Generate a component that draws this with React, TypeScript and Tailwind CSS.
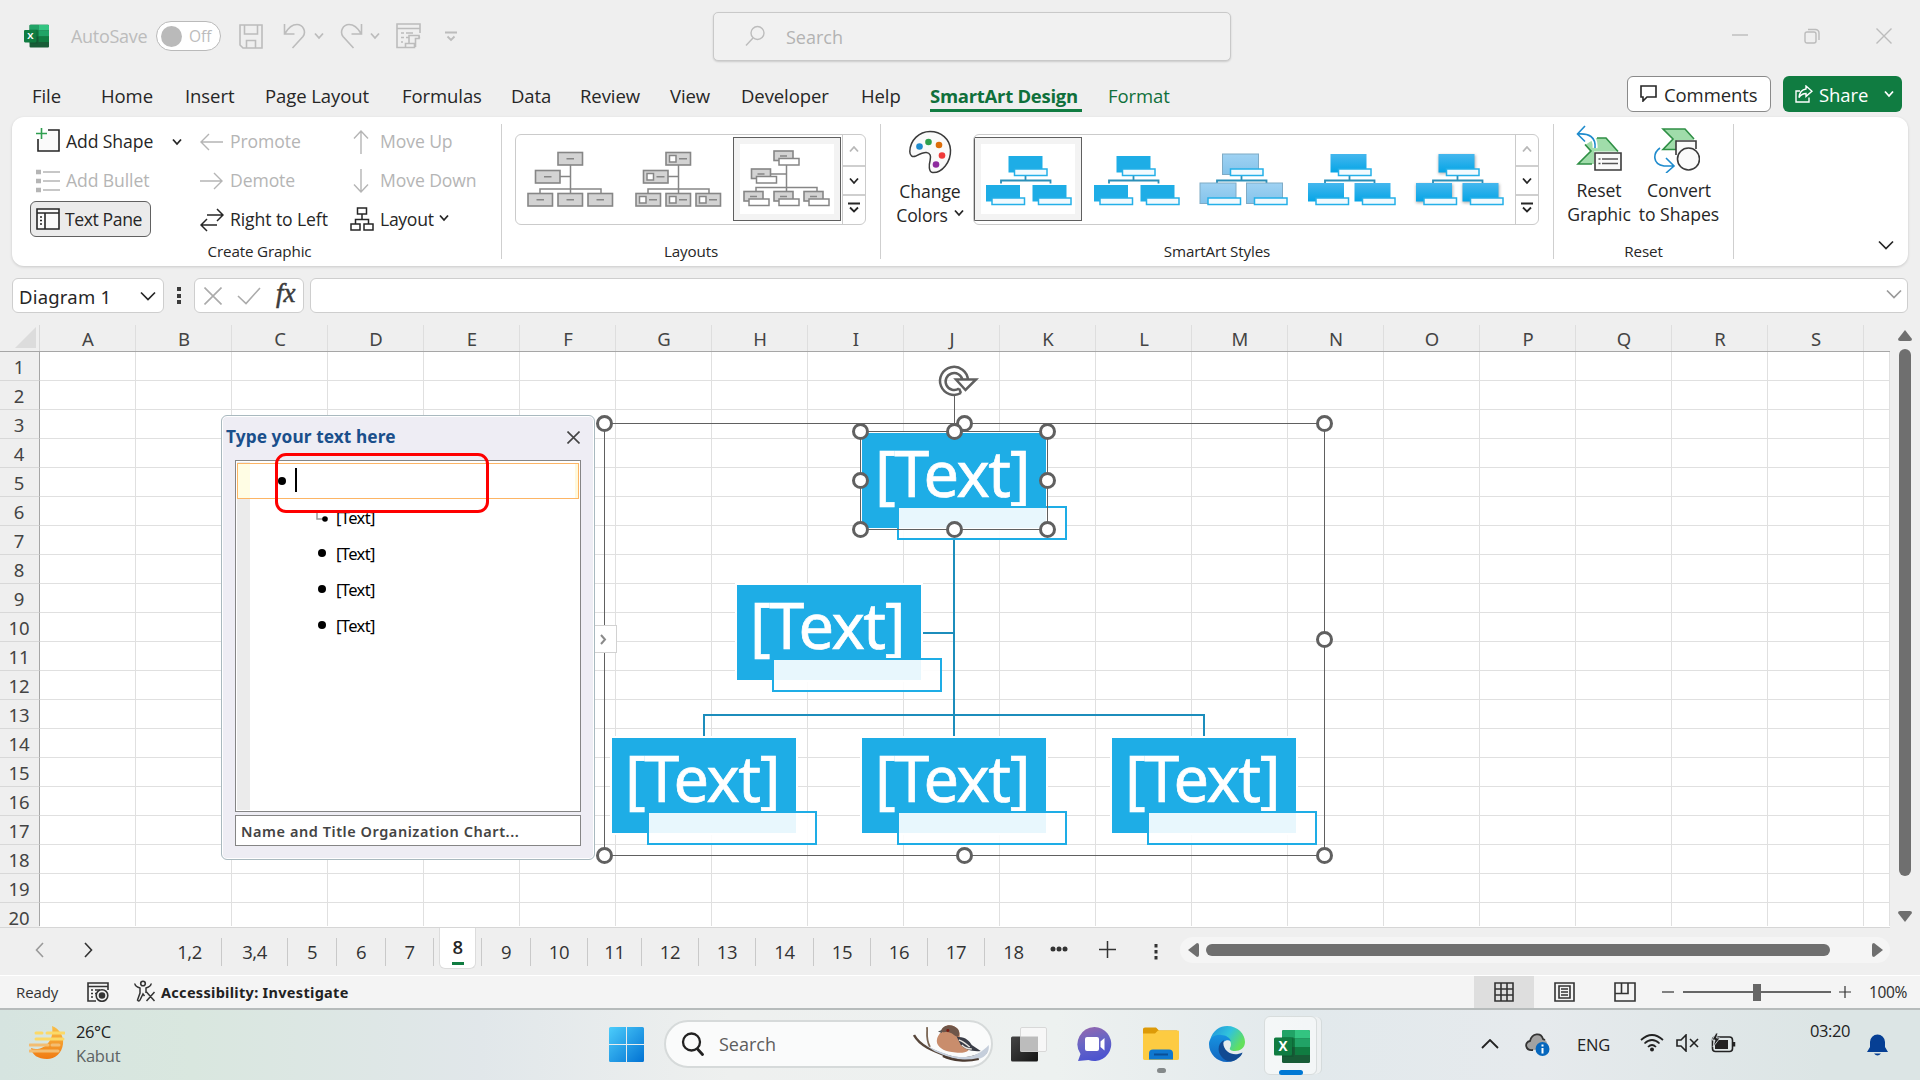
import React from "react";

type Kids = { children?: React.ReactNode };

const UI = "font-['Open_Sans','Noto_Sans',sans-serif]";

function Icon({ w, h, c = "", children }: Kids & { w: number; h: number; c?: string }) {
  return (
    <svg width={w} height={h} viewBox={`0 0 ${w} ${h}`} fill="none" stroke="currentColor" strokeWidth="1.6" className={`shrink-0 ${c}`}>
      {children}
    </svg>
  );
}

function Chevron({ c = "" }: { c?: string }) {
  return (
    <Icon w={10} h={8} c={c}>
      <path d="M1 1.5 5 6 9 1.5" strokeWidth="1.8" />
    </Icon>
  );
}

function WideChevron({ c = "" }: { c?: string }) {
  return (
    <Icon w={16} h={10} c={c}>
      <path d="M1 1.5 8 8.5 15 1.5" strokeWidth="1.7" />
    </Icon>
  );
}

function ExcelLogo({ size, c = "" }: { size: number; c?: string }) {
  return (
    <svg width={size} height={size} viewBox="0 0 36 36" className={`shrink-0 ${c}`}>
      <rect x="8" y="1" width="28" height="33" rx="1.500" fill="#185c37" />
      <path d="M8 2.500Q8 1 9.500 1H21v8.500H8z" fill="#21a366" />
      <path d="M21 1h13.500Q36 1 36 2.500v7H21z" fill="#33c481" />
      <path d="M8 9.500h13V18H8z" fill="#107c41" />
      <path d="M21 9.500h15V18H21z" fill="#21a366" />
      <path d="M21 18h15v8H21z" fill="#107c41" />
      <path d="M8 8h11.500v20H8z" fill="#0b4f2a" opacity=".4" />
      <rect x="0" y="8.500" width="18" height="18" rx="1.600" fill="#107c41" />
      <text x="9" y="22.300" textAnchor="middle" fontSize="13.500" fontWeight="700" fontFamily="Open Sans, sans-serif" fill="#fff">X</text>
    </svg>
  );
}

function TitleBar() {
  return (
    <header className="flex h-[74px] shrink-0 items-start text-[#bcbcbc]">
      <div className="flex h-[72px] w-[713px] items-center pl-6">
        <ExcelLogo size={25} />
        <span className="mt-px ml-[22px] w-[85px] text-[18px] tracking-[-0.300px]">AutoSave</span>
        <div className="flex h-[30px] w-[65px] items-center rounded-full border border-[#bababa] bg-white pl-1">
          <div className="h-[21px] w-[21px] rounded-full bg-[#bababa]" />
          <span className="mt-px ml-[7px] text-[15.500px]">Off</span>
        </div>
        <Icon w={24} h={25} c="ml-[18px]">
          <path d="M1 1h22v23H4l-3-3zM5.500 1v9h13V1M7.500 24v-7.500h9V24" />
        </Icon>
        <Icon w={23} h={26} c="ml-5">
          <path d="M1.500 1v10h10M2 10.500C6 3.500 10 1.500 14 1.500c6 0 9.500 7 6 12L9.500 25" />
        </Icon>
        <Chevron c="ml-2" />
        <Icon w={23} h={26} c="ml-4">
          <path d="M21.500 1v10h-10M21 10.500C17 3.500 13 1.500 9 1.500c-6 0-9.500 7-6 12L13.500 25" />
        </Icon>
        <Chevron c="ml-[7px]" />
        <Icon w={25} h={26} c="ml-4">
          <path d="M9 24.500H1V1h23v9M1 5.500h23M5 10h3M10 10h7M5 14.500h3M10 14.500h3M5 19h2M9.500 21.500v-1h9v4h-9zM13 20.500v-8h10v3h-3.500v8.500M23 12.500l.500 3" />
        </Icon>
        <Icon w={12} h={11} c="ml-6">
          <path d="M0 1.500h12M2.500 5.500 6 9l3.500-3.500" strokeWidth="1.800" />
        </Icon>
      </div>
      <div className="mt-3 flex h-[49px] w-[518px] items-center rounded-[5px] border border-[#c9c9c9] bg-[#f1f1f1] pl-[31px] shadow-[0_1px_2px_rgba(0,0,0,0.15)]">
        <Icon w={20} h={22} c="-mt-0.5">
          <circle cx="12.500" cy="8" r="6.500" strokeWidth="1.400" />
          <path d="M8 13 1 20.500" strokeWidth="1.400" />
        </Icon>
        <span className="mt-0.5 ml-[21px] text-[18px] text-[#b3b3b3]">Search</span>
      </div>
      <div className="flex h-[72px] flex-1 items-center pl-[501px]">
        <Icon w={16} h={16} c="-mt-0.5"><path d="M0 8h16" strokeWidth="1.400" /></Icon>
        <Icon w={16} h={16} c="ml-14">
          <rect x="1" y="4" width="11" height="11" rx="2" strokeWidth="1.400" />
          <path d="M4 1.500h7.500a3.500 3.500 0 0 1 3.500 3.500v7" strokeWidth="1.400" />
        </Icon>
        <Icon w={16} h={16} c="ml-14"><path d="M.5.5l15 15M15.500.5l-15 15" strokeWidth="1.400" /></Icon>
      </div>
    </header>
  );
}

const menuTabs = [
  { t: "File", c: "w-[69px]" },
  { t: "Home", c: "w-[84px]" },
  { t: "Insert", c: "w-20" },
  { t: "Page Layout", c: "w-[137px]" },
  { t: "Formulas", c: "w-[109px]" },
  { t: "Data", c: "w-[69px]" },
  { t: "Review", c: "w-[90px]" },
  { t: "View", c: "w-[71px]" },
  { t: "Developer", c: "w-[120px]" },
  { t: "Help", c: "w-[69px]" },
];

function MenuBar() {
  return (
    <nav className="flex h-[43px] shrink-0 items-start pl-8 text-[18.500px] leading-[43px] tracking-[-0.080px] whitespace-nowrap text-[#262626]">
      {menuTabs.map((m) => (
        <span key={m.t} className={`shrink-0 ${m.c}`}>{m.t}</span>
      ))}
      <span className="flex h-[38px] w-[152px] shrink-0 items-start border-b-[3px] border-[#107c41] text-[18.500px] font-bold tracking-[-0.280px] text-[#0f703b]">SmartArt Design</span>
      <span className="ml-[26px] w-[519px] text-[#0f703b]">Format</span>
      <div className="mt-0.5 flex h-9 w-36 items-center rounded-md border border-[#8a8a8a] bg-white pl-3">
        <Icon w={17} h={17} c="-mt-0.5">
          <path d="M1 1h15v11H7l-4 4v-4H1z" />
        </Icon>
        <span className="ml-[7px]">Comments</span>
      </div>
      <div className="mt-0.5 ml-3 flex h-9 w-[119px] items-center rounded-md bg-[#107c41] pl-3 text-white">
        <Icon w={18} h={18}>
          <path d="M5 6H1v11h13v-4.500M11 1l6 5.200-6 5.200V8.500c-3 0-5 1-7 4 .500-5 3-8 7-8.500z" strokeWidth="1.400" />
        </Icon>
        <span className="ml-[6px]">Share</span>
        <Chevron c="ml-4" />
      </div>
    </nav>
  );
}

function Row({ c = "", children }: Kids & { c?: string }) {
  return <div className={`flex h-[39px] items-center ${c}`}>{children}</div>;
}

function OrgThumb({ kind }: { kind: number }) {
  const box = { fill: "#d3d3d3", stroke: "#868686", strokeWidth: 1.6 };
  const wht = { fill: "#fff", stroke: "#868686", strokeWidth: 1.5 };
  if (kind === 2) {
    return (
      <svg width="106" height="82" viewBox="1 1 106 82">
        <path d="M53.500 24v31M23 55v-4.500h61V55M37 37h16.500" stroke="#868686" strokeWidth="1.500" fill="none" />
        {[[41, 14], [18.5, 32], [11, 54.5], [41, 54.5], [71, 54.5]].map(([x, y]) => (
          <g key={`${x}-${y}`}>
            <rect x={x} y={y} width="19" height="9.500" {...box} />
            <path d={`M${x + 6} ${y + 5}h7`} stroke="#868686" strokeWidth="1.500" />
            <rect x={x + 5} y={y + 7.5} width="20" height="6.500" {...wht} />
          </g>
        ))}
      </svg>
    );
  }
  return (
    <svg width="106" height="82" viewBox="1 1 106 82">
      <path d="M53.500 28v28M23 56v-4h61v4M43 39.500h10.500" stroke="#868686" strokeWidth="1.500" fill="none" />
      {[[41, 15.5], [18.5, 33.5], [11, 56.5], [41, 56.5], [71, 56.5]].map(([x, y]) => (
        <g key={`${x}-${y}`}>
          <rect x={x} y={y} width="24.500" height="12.500" {...box} />
          {kind === 1 && <rect x={x + 3.5} y={y + 3} width="6.500" height="6.500" {...wht} />}
          <path d={kind === 1 ? `M${x + 13} ${y + 6.3}h8` : `M${x + 8.500} ${y + 6.3}h7.500`} stroke="#868686" strokeWidth="1.500" />
        </g>
      ))}
    </svg>
  );
}

function StyleThumb({ kind }: { kind: number }) {
  const fill = kind < 2 ? "#1eade6" : kind === 2 ? "url(#pale)" : "url(#deep)";
  const big = kind >= 2 ? 2 : 0;
  return (
    <svg width="106" height="82" viewBox="1 1 106 82">
      <defs>
        <linearGradient id="pale" x1="0" y1="0" x2="0" y2="1"><stop offset="0" stopColor="#9fd2f3" /><stop offset="1" stopColor="#84c3ea" /></linearGradient>
        <linearGradient id="deep" x1="0" y1="0" x2="0" y2="1"><stop offset="0" stopColor="#45b7ee" /><stop offset="1" stopColor="#05a5e6" /></linearGradient>
      </defs>
      <path d="M51.500 38v5.500M27 46.500v-3h49.500v3" stroke="#2b8fb8" strokeWidth="1.800" fill="none" />
      {[[34.5, 19], [12, 48], [58.5, 48]].map(([x, y]) => (
        <g key={x}>
          {kind === 4 && <rect x={x - 2} y={y - 1} width="37" height="19" fill="#777" opacity=".55" className="blur-[1.500px]" />}
          <rect x={x - big} y={y - big} width={34 + big} height={16.5 + (kind === 2 ? 4 : big)} fill={fill} stroke={kind === 2 ? "#7fabc6" : "none"} />
          <rect x={x + 6} y={y + 13} width="32.500" height="6.500" fill="#f2fafe" stroke="#25b0e8" strokeWidth="1.500" />
        </g>
      ))}
    </svg>
  );
}

function GalleryButtons() {
  return (
    <div className="flex w-[23px] flex-col border-l border-[#cbcbcb]">
      <div className="flex h-8 items-center justify-center border-b-2 border-[#cfcfcf]"><Chevron c="-mt-0.5 rotate-180 text-[#b8b8b8]" /></div>
      <div className="flex h-[29px] items-center justify-center border-b-2 border-[#cfcfcf]"><Chevron /></div>
      <div className="flex flex-1 items-center justify-center">
        <Icon w={12} h={12} c="-mt-1"><path d="M0 1.500h12" strokeWidth="2" /><path d="M2 5.500 6 9.500l4-4" strokeWidth="1.800" /></Icon>
      </div>
    </div>
  );
}

function Tile({ on, children }: Kids & { on: boolean }) {
  return (
    <div className={on ? "h-[84px] w-[108px] shrink-0 border border-[#5f5f5f] shadow-[inset_0_0_0_6px_#f3f3f3]" : "h-[84px] w-[108px] shrink-0 border border-transparent"}>
      {children}
    </div>
  );
}

function GroupLabel({ children }: Kids) {
  return <div className="absolute inset-x-0 -bottom-[3px] text-center text-[15.200px] leading-[22px] tracking-[-0.150px]">{children}</div>;
}

const dim = "text-[#b5b5b5]";

function Ribbon() {
  return (
    <section className="mx-3 flex h-[149px] shrink-0 rounded-xl bg-white py-[7px] text-[17.600px] tracking-[-0.100px] whitespace-nowrap text-[#262626] shadow-[0_1px_3px_rgba(0,0,0,0.16)]">
      <div className="relative flex w-[490px] items-start border-r border-[#cfcfcf] pb-[9px] pl-[18px]">
        <div className="w-[170px]">
          <Row c="-mt-0.5">
            <Icon w={24} h={24} c="-mt-1 ml-1.5">
              <path d="M11 2h12v21H2V11" fill="#fafafa" stroke="none" />
              <path d="M12 2h11v21H2V11" /><path d="M5.500 0v11M0 5.500h11" stroke="#2f9e4f" />
            </Icon>
            <span className="ml-1.5 w-[106px]">Add Shape</span><Chevron />
          </Row>
          <Row c={dim}>
            <Icon w={24} h={24} c="ml-1.5">
              <path d="M7 3h17M7 12h17M7 21h17" /><path d="M0 3h5M0 12h5M0 21h5" strokeWidth="4.500" />
            </Icon>
            <span className="ml-1.5">Add Bullet</span>
          </Row>
          <div className="mt-px flex h-9 w-[121px] items-center rounded-md border border-[#616161] bg-[#ebebeb] pl-[5px]">
            <Icon w={24} h={22}>
              <path d="M1 1h22v20H1z" fill="#fafafa" /><path d="M1 5h22M9 5v16M4 9h2M4 12.500h2M4 16h2" />
            </Icon>
            <span className="mt-px ml-[5px] tracking-[-0.400px]">Text Pane</span>
          </div>
        </div>
        <div className="w-[151px]">
          <Row c={`-mt-0.5 ${dim}`}><Icon w={23} h={18}><path d="M9 1 1 9l8 8M1 9h22" strokeWidth="1.400" /></Icon><span className="ml-[7px]">Promote</span></Row>
          <Row c={dim}><Icon w={23} h={18}><path d="m14 1 8 8-8 8M22 9H0" strokeWidth="1.400" /></Icon><span className="ml-[7px]">Demote</span></Row>
          <Row><Icon w={24} h={24}><path d="m17 1 6 6-6 6M23 7H7M7 11l-6 6 6 6M1 17h16" strokeWidth="1.500" /></Icon><span className="ml-1.5">Right to Left</span></Row>
        </div>
        <div>
          <Row c={`-mt-0.5 ${dim}`}><Icon w={16} h={24} c="ml-0.5"><path d="m1 8.500 7-7.500 7 7.500M8 1v23" strokeWidth="1.400" /></Icon><span className="ml-[11px]">Move Up</span></Row>
          <Row c={dim}><Icon w={16} h={24} c="ml-0.5"><path d="m1 15.500 7 7.500 7-7.500M8 23V0" strokeWidth="1.400" /></Icon><span className="ml-[11px]">Move Down</span></Row>
          <Row><Icon w={24} h={24} c="-mt-0.5 -ml-px"><path d="M7.500 1h9v6h-9zM1 17h9v6H1zM14 17h9v6h-9zM12 7v5.500M5.500 17v-4.500h13V17" strokeWidth="1.500" /></Icon><span className="mr-[5px] ml-1.5 tracking-[-0.300px]">Layout</span><Chevron c="-mt-1" /></Row>
        </div>
        <GroupLabel><span className="ml-[6px]">Create Graphic</span></GroupLabel>
      </div>

      <div className="relative w-[379px] border-r border-[#cfcfcf] pt-[10px] pl-[13px]">
        <div className="flex h-[91px] w-[351px] overflow-hidden rounded-md border border-[#cbcbcb]">
          <div className="flex w-[326px] pt-0.5 pl-px">
            {[0, 1, 2].map((k) => <Tile key={k} on={k === 2}><OrgThumb kind={k} /></Tile>)}
          </div>
          <GalleryButtons />
        </div>
        <GroupLabel>Layouts</GroupLabel>
      </div>

      <div className="relative flex w-[673px] border-r border-[#cfcfcf] pt-[10px]">
        <div className="-mt-1 flex w-[92px] flex-col items-center pl-1.5 leading-6">
          <svg width="44" height="44" viewBox="0 0 44 44" fill="none">
            <path d="M22 1.500C11 1.500 2 10.500 1.800 21.500c0 4 2.500 6 6 4.500 3.500-1.800 7-3.800 10.500-3.600 4 .3 5 3.800 3.800 8.100-1.200 4.500-1.600 11.500 2.500 12C34 43 43 32 42.500 20 42 9 33 1.500 22 1.500z" fill="#fafafa" stroke="#3b3b3b" strokeWidth="1.500" />
            <circle cx="11.500" cy="16.500" r="3.300" fill="#1e8bcd" /><circle cx="20.500" cy="12" r="3.300" fill="#2fa04e" />
            <circle cx="31" cy="15" r="3.300" fill="#dd6d0a" /><circle cx="34" cy="25.500" r="3.300" fill="#f03a3a" /><circle cx="28" cy="34.500" r="3.300" fill="#8e2b9e" />
          </svg>
          <span className="mt-[5px]">Change</span>
          <span className="flex items-center gap-1.5">Colors <Chevron c="-mt-1" /></span>
        </div>
        <div className="flex h-[91px] w-[566px] overflow-hidden rounded-md border border-[#cbcbcb]">
          <div className="flex w-[541px] pt-0.5">
            {[0, 1, 2, 3, 4].map((k) => <Tile key={k} on={k === 0}><StyleThumb kind={k} /></Tile>)}
          </div>
          <GalleryButtons />
        </div>
        <GroupLabel>SmartArt Styles</GroupLabel>
      </div>

      <div className="relative flex w-[180px] border-r border-[#cfcfcf] pt-[3px] leading-6">
        <div className="flex w-[90px] flex-col items-center">
          <svg width="46" height="46" viewBox="0 0 46 46" fill="none" strokeWidth="1.600" className="-mt-0.5">
            <path d="M20 13h10l12 13.500H18V39H2l12-12.500L9 20z" fill="#a0dcaa" />
            <path d="M21 13h9l12 13.500M16 39H2l13-13-6-6.500" stroke="#2f8f45" />
            <path d="M9 1 1.500 9 9 16.500M1.500 9C13 8 20 12 19 23" stroke="#fff" strokeWidth="5" />
            <path d="M9 1 1.500 9 9 16.500M1.500 9C13 8 20 12 19 23" stroke="#1e8bcd" />
            <path d="M19 28h26v17H19z" fill="#fafafa" stroke="#3b3b3b" />
            <path d="M22.500 34h2M26 34h16M22.500 38.500h2M26 38.500h16" stroke="#555" strokeWidth="1.300" />
          </svg>
          <span className="mt-[7px]">Reset</span><span>Graphic</span>
        </div>
        <div className="-ml-[4px] flex w-[78px] flex-col items-center">
          <svg width="46" height="48" viewBox="0 0 46 48" fill="none" strokeWidth="1.600" className="-mt-0.5 -ml-1">
            <path d="M9 4h22l9 11H23v9H9l10-10z" fill="#a0dcaa" />
            <path d="M40 14 31 4H9l10 10L9 24.500h13" stroke="#2f8f45" />
            <path d="M22 30V16h20v8" fill="#fafafa" stroke="#3b3b3b" />
            <circle cx="34.500" cy="34" r="11" fill="#fafafa" stroke="#3b3b3b" />
            <path d="M6 23C-1 28-2 39 10 41h10M12 33l8 8-8 7" stroke="#1e8bcd" />
          </svg>
          <span className="mt-[5px]">Convert</span><span className="tracking-[-0.020px]">to Shapes</span>
        </div>
        <GroupLabel>Reset</GroupLabel>
      </div>
      <div className="flex flex-1 items-end justify-end pr-[14px] pb-[9px]"><WideChevron /></div>
    </section>
  );
}

function FormulaBar() {
  return (
    <section className="flex h-[59px] shrink-0 items-start pt-3 pl-3 text-[#3b3b3b]">
      <div className="flex h-[35px] w-[152px] items-center rounded-md border border-[#cecece] bg-white pl-1.5 font-['Noto_Sans',sans-serif] text-[18.500px] tracking-[0.200px] text-[#262626]">
        <span className="mt-0.5 w-[121px]">Diagram 1</span><WideChevron />
      </div>
      <div className="mt-[9px] ml-[13px] flex w-1 flex-col gap-[2.500px]">
        <div className="h-1 w-1 bg-[#3b3b3b]" /><div className="h-1 w-1 bg-[#3b3b3b]" /><div className="h-1 w-1 bg-[#3b3b3b]" />
      </div>
      <div className="ml-[13px] flex h-[35px] w-[110px] items-center rounded-md border border-[#cecece] bg-white pl-[9px]">
        <Icon w={18} h={18} c="text-[#ababab]"><path d="m.5.5 17 17M17.500.5l-17 17" /></Icon>
        <Icon w={24} h={18} c="ml-[15px] text-[#ababab]"><path d="m1 9 8 7.500L23 1" /></Icon>
        <span className="-mt-1 ml-[15px] font-['Liberation_Serif',serif] text-[27px] italic [-webkit-text-stroke:0.500px_#3b3b3b]">fx</span>
      </div>
      <div className="ml-1.5 flex h-[35px] w-[1598px] items-start justify-end rounded-md border border-[#cecece] bg-white pt-[10px] pr-[5px]">
        <WideChevron c="text-[#9a9a9a]" />
      </div>
    </section>
  );
}

const letters = "ABCDEFGHIJKLMNOPQRS".split("");
const rows = Array.from({ length: 20 }, (_, i) => i + 1);

function Sheet() {
  return (
    <div className="w-[1890px] shrink-0 border-b border-[#d6d6d6] font-['Noto_Sans','Open_Sans',sans-serif]">
      <div className="flex h-[27px] border-b border-[#a6a6a6] text-[18.500px] leading-[27px] text-[#444]">
        <div className="flex w-10 items-end justify-end border-r border-[#d8d8d8] pr-[3px] pb-[3px]">
          <svg width="21" height="21" viewBox="0 0 21 21"><path d="M21 0v21H0z" fill="#dcdcdc" /></svg>
        </div>
        {letters.map((l) => (
          <div key={l} className="w-24 shrink-0 border-r border-[#dedede] pl-px text-center">{l}</div>
        ))}
      </div>
      {rows.map((r) => (
        <div key={r} className={r === 20 ? "flex h-[23px] *:border-b-0" : "flex h-[29px]"}>
          <div className="w-10 shrink-0 border-r border-b border-r-[#a6a6a6] border-b-[#d8d8d8] pr-px text-center text-[18.500px] leading-[29px] text-[#444]">{r}</div>
          {letters.map((l) => (
            <div key={l} className="w-24 shrink-0 border-r border-b border-[#e0e0e0] bg-white" />
          ))}
          <div className="flex-1 border-r border-b border-[#e0e0e0] bg-white" />
        </div>
      ))}
      <div className="ml-10 h-px bg-white" />
    </div>
  );
}

function VScroll() {
  return (
    <div className="flex w-[26px] flex-col items-center rounded-full pt-[5px]">
      <svg width="14" height="11" viewBox="0 0 14 11"><path d="M7 0 14 9q0 2-2 2H2q-2 0-2-2z" fill="#6f6f6f" /></svg>
      <div className="mt-2 h-[527px] w-3 rounded-full bg-[#6f6f6f]" />
      <svg width="14" height="11" viewBox="0 0 14 11" className="mt-[35px]"><path d="M7 11 14 2q0-2-2-2H2Q0 0 0 2z" fill="#6f6f6f" /></svg>
    </div>
  );
}

const nodes = [
  { n: "left-[862px] top-[433px]", s: "left-[897px] top-[506px]" },
  { n: "left-[737px] top-[585px]", s: "left-[772px] top-[658px]" },
  { n: "left-[612px] top-[738px]", s: "left-[647px] top-[811px]" },
  { n: "left-[862px] top-[738px]", s: "left-[897px] top-[811px]" },
  { n: "left-[1112px] top-[738px]", s: "left-[1147px] top-[811px]" },
];
const handles = [
  [604.5, 423.5], [964.5, 423.5], [1324.5, 423.5], [1324.5, 639.5], [1324.5, 855.5], [964.5, 855.5], [604.5, 855.5],
  [860.5, 431.5], [954.5, 431.5], [1047.5, 431.5], [860.5, 480.5], [1047.5, 480.5], [860.5, 529.5], [954.5, 529.5], [1047.5, 529.5],
];

function Diagram() {
  return (
    <div className="absolute -top-[325px] left-0 h-[927px] w-[1400px]">
      <svg width="1400" height="927" viewBox="0 0 1400 927" fill="none" className="absolute inset-0">
        <path d="M954 530v206M923 633h31M704 736v-21h500v21" stroke="#1c8dbc" strokeWidth="2" />
      </svg>
      {nodes.map((p) => (
        <div key={p.n}>
          <div className={`absolute h-[95px] w-[184px] bg-[#1eade6] pr-1 text-center font-['Noto_Sans',sans-serif] text-[63px] leading-[79px] tracking-[-1.400px] text-white outline-2 outline-white [-webkit-text-stroke:0.700px_white] ${p.n}`}>[Text]</div>
          <div className={`absolute h-[34px] w-[170px] border-2 border-[#1eade6] bg-white/90 ${p.s}`} />
        </div>
      ))}
      <svg width="1400" height="927" viewBox="0 0 1400 927" fill="none" className="absolute inset-0" stroke="#606060">
        <path d="M604.500 423.500h720v432h-720zM860.500 431.500h187v98h-187zM954.500 394v38" />
        {handles.map(([x, y]) => <circle key={`${x}-${y}`} cx={x} cy={y} r="7" fill="#fff" strokeWidth="3" />)}
        <path d="M954 380.500m7 12.500A14 14 0 1 1 968 380M959 388.500a8.500 8.500 0 1 1 3.500-8.500" strokeWidth="2.500" />
        <path d="M956 379.500h20l-10.500 10.500zM961 393l-2-4.500" strokeWidth="2.500" fill="#fff" />
      </svg>
      <div className="absolute top-[625px] left-[594px] flex h-7 w-[23px] items-center border border-[#d2d2d2] bg-white pl-[5px]">
        <Icon w={7} h={11}><path d="m1 1 4 4.500L1 10" stroke="#8a8a8a" strokeWidth="2" /></Icon>
      </div>
    </div>
  );
}

function TextPane() {
  return (
    <aside className="absolute top-[90px] left-[221px] flex h-[445px] w-[374px] flex-col rounded-md border border-[#a9b9bf] bg-[#eeedf4] px-[13px] shadow-[inset_0_0_0_1px_#fff]">
      <div className="-ml-[9px] flex h-[44px] items-center justify-between text-[17.300px] font-bold text-[#1a4f8b]">
        <span className="-mt-0.5 font-['Noto_Sans',sans-serif] tracking-[0.080px]">Type your text here</span>
        <Icon w={13} h={13} c="-mt-0.5 mr-px text-[#444]"><path d="m.5.5 12 12M12.500.5l-12 12" /></Icon>
      </div>
      <div className="relative h-[352px] w-[346px] border border-[#858585] bg-white font-['Noto_Sans',sans-serif] text-[16.500px] tracking-[-0.600px] text-black">
        <div className="absolute top-px bottom-px left-px w-[13px] bg-[#ebebeb]" />
        <div className="relative mt-0.5 ml-px flex h-9 w-[342px] items-center border border-[#fdb565] bg-white shadow-[inset_-3px_0_0_#fff9dc]">
          <div className="h-full w-3 bg-[#fffde4]" />
          <div className="ml-[28px] h-2 w-2 rounded-full bg-black" />
          <div className="-mt-0.5 ml-[9px] h-6 w-0.5 bg-black" />
        </div>
        <div className="relative flex h-9 items-center pl-[80px]">
          <Icon w={12} h={14}><path d="M1 0v9h6" stroke="#999" strokeWidth="1.500" /><circle cx="9" cy="9" r="2.800" fill="#000" stroke="none" /></Icon>
          <span className="mt-0.5 ml-2">[Text]</span>
        </div>
        {[0, 1, 2].map((i) => (
          <div key={i} className="relative flex h-9 items-center pl-[82px]">
            <div className="h-2 w-2 rounded-full bg-black" />
            <span className="mt-0.5 ml-[10px]">[Text]</span>
          </div>
        ))}
        <div className="absolute -top-[8px] left-[39px] h-[60px] w-[214px] rounded-[11px] border-[3.500px] border-[#fe0000]" />
      </div>
      <div className="mt-[3px] h-[31px] w-[346px] border border-[#858585] bg-white pl-[5px] font-['Noto_Sans',sans-serif] text-[14.500px] leading-[31px] font-semibold tracking-[0.550px] text-[#444]">
        Name and Title Organization Chart...
      </div>
    </aside>
  );
}

const before = [
  { t: "1,2", c: "w-[64px]" }, { t: "3,4", c: "w-[66px]" }, { t: "5", c: "w-[49px]" }, { t: "6", c: "w-[49px]" }, { t: "7", c: "w-[48px]" },
];
const after = [
  { t: "9", c: "w-[49px]" }, { t: "10", c: "w-[57px]" }, { t: "11", c: "w-[54px]" }, { t: "12", c: "w-[57px]" }, { t: "13", c: "w-[57px]" },
  { t: "14", c: "w-[58px]" }, { t: "15", c: "w-[57px]" }, { t: "16", c: "w-[57px]" }, { t: "17", c: "w-[57px]" },
];

function SheetTabs() {
  return (
    <nav className="flex h-[47px] shrink-0 items-start text-[18.500px] tracking-[-0.400px] text-[#333]">
      <Icon w={9} h={16} c="mt-[14px] ml-[35px] text-[#9a9a9a]"><path d="M8 1 1.500 8 8 15" /></Icon>
      <Icon w={9} h={16} c="mt-[14px] ml-[40px]"><path d="m1 1 6.500 7L1 15" /></Icon>
      <div className="mt-[10px] ml-[65px] flex h-7 text-center leading-[28px]">
        {before.map((s) => <span key={s.t} className={`shrink-0 border-r border-[#c9c9c9] ${s.c}`}>{s.t}</span>)}
      </div>
      <div className="-mt-px ml-[5px] flex h-[42px] w-[37px] flex-col items-center rounded-b-md border border-t-0 border-[#dcdcdc] bg-white pt-2 leading-6 font-semibold text-[#262626]">
        8<div className="mt-[3px] h-[3px] w-3 bg-[#107c41]" />
      </div>
      <div className="mt-[10px] ml-[5px] flex h-7 border-l border-[#c9c9c9] text-center leading-[28px]">
        {after.map((s) => <span key={s.t} className={`shrink-0 border-r border-[#c9c9c9] ${s.c}`}>{s.t}</span>)}
        <span className="w-[57px]">18</span>
      </div>
      <Icon w={18} h={6} c="mt-[18px] ml-2"><g fill="currentColor" stroke="none"><circle cx="3" cy="3" r="2.500" /><circle cx="9" cy="3" r="2.500" /><circle cx="15" cy="3" r="2.500" /></g></Icon>
      <Icon w={17} h={17} c="mt-[13px] ml-[31px]"><path d="M8.500 0v17M0 8.500h17" strokeWidth="1.500" /></Icon>
      <Icon w={4} h={16} c="mt-[16px] ml-[38px]"><path d="M2 0v3.500M2 6v3.500M2 12v3.500" strokeWidth="3" /></Icon>
      <div className="mt-[9px] ml-[22px] flex h-[26px] w-[710px] items-center rounded-full bg-[#f5f5f5] pl-2">
        <svg width="11" height="14" viewBox="0 0 11 14"><path d="M0 7 9 0q2 0 2 2v10q0 2-2 2z" fill="#6f6f6f" /></svg>
        <div className="ml-[7px] h-3 w-[624px] rounded-full bg-[#6f6f6f]" />
        <svg width="11" height="14" viewBox="0 0 11 14" className="ml-[42px]"><path d="M11 7 2 0Q0 0 0 2v10q0 2 2 2z" fill="#6f6f6f" /></svg>
      </div>
    </nav>
  );
}

function StatusBar() {
  return (
    <footer className="flex h-[35px] shrink-0 items-center border-t border-b-2 border-t-white border-b-[#b6bbbb] bg-[#f4f4f4] text-[15px] text-[#333]">
      <span className="ml-4 w-[71px] tracking-[-0.100px]">Ready</span>
      <Icon w={22} h={20}>
        <path d="M9 19H1V1h20v7M1 4.500h20M4 8h2M8 8h5M4 11.500h2M8 11.500h1.500M4 15h2" />
        <circle cx="15" cy="13.500" r="5.800" /><circle cx="15" cy="13.500" r="2.500" fill="currentColor" />
      </Icon>
      <Icon w={22} h={22} c="-mt-0.5 ml-[25px]">
        <circle cx="9" cy="3.500" r="2.300" />
        <path d="M1 3.500q-.5 2.500 5 4.500v5L3.500 20q1.500 2 2.500 0L9 14l1.500 2M17 3.500q.5 2.500-5 4.500v5M12.500 12l8 9M20.500 12l-8 9" strokeWidth="1.500" />
      </Icon>
      <span className="mt-0.5 ml-[5px] w-[1314px] font-['Noto_Sans',sans-serif] text-[14.500px] font-bold tracking-[0.300px] text-[#222]">Accessibility: Investigate</span>
      <div className="-ml-px flex h-8 w-[60px] shrink-0 items-center justify-center bg-[#dedede]">
        <Icon w={20} h={20}><path d="M1 1h18v18H1zM7 1v18M13 1v18M1 7h18M1 13h18" /></Icon>
      </div>
      <Icon w={21} h={20} c="ml-5"><path d="M1 1h19v18H1zM5 4h11v12H5zM7 7h7M7 10h7M7 13h7" /></Icon>
      <Icon w={22} h={20} c="ml-[39px]"><path d="M1 1h20v18H1zM1 11.500h13V1M7.500 1v10.500" /></Icon>
      <Icon w={12} h={12} c="ml-[26px]"><path d="M0 6h12" strokeWidth="1.200" /></Icon>
      <div className="ml-[9px] flex h-[17px] w-[148px] items-center">
        <div className="h-0.5 w-[70px] bg-[#666]" /><div className="h-[17px] w-2 bg-[#666]" /><div className="h-0.5 flex-1 bg-[#666]" />
      </div>
      <Icon w={12} h={12} c="ml-2"><path d="M6 0v12M0 6h12" strokeWidth="1.200" /></Icon>
      <span className="mt-0.5 ml-[18px] font-['Noto_Sans',sans-serif] text-[15.500px] tracking-[-0.400px]">100%</span>
    </footer>
  );
}

function Bird() {
  return (
    <svg width="78" height="40" viewBox="0 0 78 40" fill="none">
      <path d="M1 11C7 22 20 27 34 32c12 4 22 4 40-4" stroke="#57473b" strokeWidth="2.500" />
      <path d="M14 3c1 6-2 10 3 20" stroke="#7a6553" strokeWidth="1.800" />
      <path d="M12 20c8 6 16 8 24 11 10 3 20 3 28-1 5-2 9-6 12-9 1 7-3 12-10 14-8 2-18 1-26-1-10-3-20-6-28-14z" fill="#c5cedb" />
      <path d="M30 32c10 5 24 6 36 3" stroke="#4b3b31" strokeWidth="2.200" />
      <path d="M28 8C30 0 40-1 45 5c2 3 2 6 2 9 5 3 8 7 9 12-4 4-12 3-17 2-9-1-16-6-15-12 0-3 2-5 4-8z" fill="#c98d6c" />
      <path d="M28 7C30 0 40-1 45 5c2 3 2 6 0 8-4-1-6-5-11-5-2 0-4 1-6-1z" fill="#6f5649" />
      <path d="M44 13c8-1 13 4 15 8l9 6c-8 1-17-2-20-6z" fill="#3a3d47" />
      <path d="M46 16c4 1 7 4 11 7M49 21c3 3 6 4 10 4" stroke="#e7e5df" strokeWidth="1.500" />
      <circle cx="35" cy="6.500" r="1.500" fill="#7a1a10" /><path d="m29 6-4 1.500 4 1.500z" fill="#555" />
    </svg>
  );
}

function Taskbar() {
  return (
    <footer className="flex h-[70px] shrink-0 items-center bg-[linear-gradient(90deg,#d6e4e0_0%,#d9e7df_10%,#e1e7ea_25%,#eef0ef_38%,#edf1f0_55%,#e2e9ec_68%,#e6eaed_80%,#dce5e5_95%)] text-[#222]">
      <svg width="36" height="34" viewBox="0 0 36 34" className="-mt-1 ml-[29px] shrink-0">
        <defs><linearGradient id="moon" x1="0" y1="0" x2="0" y2="1"><stop offset="0" stopColor="#f9c04a" /><stop offset="1" stopColor="#f07a12" /></linearGradient></defs>
        <path d="M23 0c8 3 12 11 11 18-1 9-8 15-16 15C9 33 3 29 2 22c9 4 24-4 21-22z" fill="url(#moon)" />
        <path d="M7 7h6M18 7h17M7 13h27" stroke="#fbd968" strokeWidth="3" strokeLinecap="round" />
        <path d="M1 19h18M23 19h7M1 25h28" stroke="#f3bd72" strokeWidth="3" strokeLinecap="round" />
      </svg>
      <div className="-mt-[3px] ml-[11px] w-[533px] text-[16.500px] leading-6 tracking-[-0.400px]">
        <div>26°C</div><div className="tracking-[-0.200px] text-[#5d6364]">Kabut</div>
      </div>
      <svg width="35" height="35" viewBox="0 0 35 35" className="-mt-px shrink-0">
        <defs><linearGradient id="win" x1="0" y1="0" x2="1" y2="1"><stop offset="0" stopColor="#4ccdfb" /><stop offset="1" stopColor="#0272d3" /></linearGradient></defs>
        <path d="M1.500 0H17v17H0V1.500Q0 0 1.500 0zM18 0h15.500Q35 0 35 1.500V17H18zM0 18h17v17H1.500Q0 35 0 33.500zM18 18h17v15.500q0 1.500-1.500 1.500H18z" fill="url(#win)" />
      </svg>
      <div className="-mt-0.5 ml-[20px] flex h-12 w-[329px] shrink-0 items-center rounded-full border-2 border-[#d6dada] bg-[#fafbfb] pl-[15px]">
        <Icon w={24} h={24}><circle cx="10.500" cy="10" r="8.500" strokeWidth="2.300" /><path d="m16.500 17 5 5.500" strokeWidth="2.800" strokeLinecap="round" /></Icon>
        <span className="ml-[14px] w-[195px] text-[18px] text-[#5d5d5d]">Search</span>
        <Bird />
      </div>
      <svg width="36" height="35" viewBox="0 0 36 35" className="-mt-px ml-[18px] shrink-0">
        <defs><linearGradient id="dark" x1="0" y1="0" x2="1" y2="1"><stop offset="0" stopColor="#454545" /><stop offset="1" stopColor="#151515" /></linearGradient></defs>
        <rect x="0" y="9.500" width="27" height="25" rx="1.500" fill="url(#dark)" />
        <rect x="9.500" y=".5" width="26" height="24" rx="1.500" fill="#f7f7f7" stroke="#d8d8d8" />
        <path d="M9 9.500h18v15H9z" fill="#bcbcbc" />
      </svg>
      <svg width="35" height="35" viewBox="0 0 35 35" className="-mt-px ml-[30px] shrink-0">
        <defs><linearGradient id="chat" x1="0" y1="0" x2=".3" y2="1"><stop offset="0" stopColor="#9a67ac" /><stop offset=".5" stopColor="#6a66c4" /><stop offset="1" stopColor="#4d54cf" /></linearGradient></defs>
        <path d="M17.500 0a17 17 0 1 1-6 33L1 34l2.500-7A17.300 17.300 0 0 1 17.500 0z" fill="url(#chat)" />
        <rect x="8" y="10" width="14" height="14" rx="2" fill="#fff" /><path d="m23.500 14.500 4-3.500v12.500l-4-3.500z" fill="#fff" />
      </svg>
      <div className="ml-[31px] flex w-9 shrink-0 flex-col items-center pt-[10px]">
        <svg width="36" height="34" viewBox="0 0 36 34">
          <path d="M0 2q0-1.500 2-1.500h11l3 3h18v4H0z" fill="#dd9a08" />
          <path d="M0 6.500h12l3-3h20q1 0 1 1v27q0 1.500-2 1.500H2q-2 0-2-1.500z" fill="#fdcb42" />
          <path d="M6 32.500v-6q0-4 4-4h16q4 0 4 4v6z" fill="#0f78cf" /><path d="M11 27.500h14" stroke="#0a4f96" strokeWidth="2" />
        </svg>
        <div className="mt-[7px] h-[5px] w-[9px] rounded-full bg-[#84898a]" />
      </div>
      <svg width="36" height="36" viewBox="0 0 36 36" className="-mt-[2px] ml-[30px] shrink-0">
        <defs>
          <linearGradient id="edgeA" x1="0" y1="0" x2="1" y2=".5"><stop offset="0" stopColor="#1e8fdc" /><stop offset=".55" stopColor="#31c3dc" /><stop offset="1" stopColor="#63e05c" /></linearGradient>
          <linearGradient id="edgeB" x1="0" y1="0" x2="0" y2="1"><stop offset="0" stopColor="#1793e0" /><stop offset="1" stopColor="#1266c0" /></linearGradient>
        </defs>
        <path d="M1 14C4 4 11 0 18 0c11 0 18 8 18 16 0 6-5 9-10 9-4 0-6-1.500-5-3 3-5-1-11-7-11-5 0-10 1-13 3z" fill="url(#edgeA)" />
        <path d="M0 18c0-6 6-10 12-9 5 0 9 3 10 6-5-2-9 1-9 6 0 8 8 13 15 12-3 2-6 3-10 3C8 36 0 28 0 18z" fill="url(#edgeB)" />
        <path d="M15 14c-6 3-7 11-3 16 4 6 11 7 16 3 3-2 5-4 5.500-6.500-5 2.500-11 2.500-15-1-4-3-5-8-3.500-11.500z" fill="#114a92" />
      </svg>
      <div className="mt-0 ml-[19px] flex h-[59px] w-[53px] shrink-0 flex-col items-center rounded-md border border-[#d8dddd] bg-white/60 pt-3 shadow-[5px_0_0_-1px_#eef1f2,6px_0_0_-1px_#d5dbdc]">
        <ExcelLogo size={36} c="ml-0.5" />
        <div className="mt-[5px] h-[5px] w-6 shrink-0 rounded-full bg-[#0078d4]" />
      </div>
      <Icon w={18} h={10} c="-mt-0.5 ml-[164px]"><path d="m1 9 8-8 8 8" strokeWidth="1.800" /></Icon>
      <svg width="25" height="24" viewBox="0 0 25 24" className="ml-[26px] shrink-0">
        <path d="M5 17C0 17-1 9 5 8 7 0 16-1 18 6c4 1 5 5 4 8L9 17z" fill="#a2a2a2" /><path d="M8 17C0 18-1 9 5 8 7 0 16-1 18 6l2 1" fill="none" stroke="#333" strokeWidth="1.800" />
        <circle cx="17.500" cy="16" r="7" fill="#0767bd" /><path d="M17.500 11.500v2M17.500 15v5.500" stroke="#fff" strokeWidth="2" />
      </svg>
      <span className="ml-[27px] w-[63px] text-[16.500px] tracking-[-0.200px]">ENG</span>
      <Icon w={24} h={18} c="-mt-1"><path d="M1 6q11-10 22 0M4.500 9.500q7.500-7 15 0M8 13q4-4 8 0" strokeWidth="1.700" /><circle cx="12" cy="15.500" r="2" fill="currentColor" stroke="none" /></Icon>
      <Icon w={23} h={18} c="-mt-1 ml-3"><path d="M1 6h4l5-5v16l-5-5H1zM14 5l8 8M22 5l-8 8" /></Icon>
      <Icon w={25} h={20} c="-mt-[5px] ml-[12px]">
        <rect x="1.500" y="4" width="20" height="14.500" rx="3" /><rect x="4" y="7" width="13" height="9" fill="currentColor" stroke="none" />
        <path d="M23 9v4.500" strokeWidth="2.500" /><path d="M5 0 1 7h3l-2 7 7-9H5.500L7 0z" fill="currentColor" stroke="#e3e9ec" strokeWidth=".8" />
      </Icon>
      <span className="-mt-[27px] ml-[74px] w-[57px] text-[16.500px] tracking-[-0.400px]">03:20</span>
      <svg width="21" height="23" viewBox="0 0 21 23" className="-mt-0.5 shrink-0"><path d="M3 9a7.500 7.500 0 0 1 15 0v5l3 5H0l3-5zM7 20.500h7q-3.500 4-7 0z" fill="#063f94" /></svg>
    </footer>
  );
}

export default function App() {
  return (
    <div className={`flex h-[1080px] w-[1920px] flex-col overflow-hidden bg-[#efefef] ${UI}`}>
      <TitleBar />
      <MenuBar />
      <Ribbon />
      <FormulaBar />
      <main className="relative flex h-[603px] shrink-0 gap-0.5">
        <Sheet />
        <VScroll />
        <Diagram />
        <TextPane />
      </main>
      <SheetTabs />
      <StatusBar />
      <Taskbar />
    </div>
  );
}
